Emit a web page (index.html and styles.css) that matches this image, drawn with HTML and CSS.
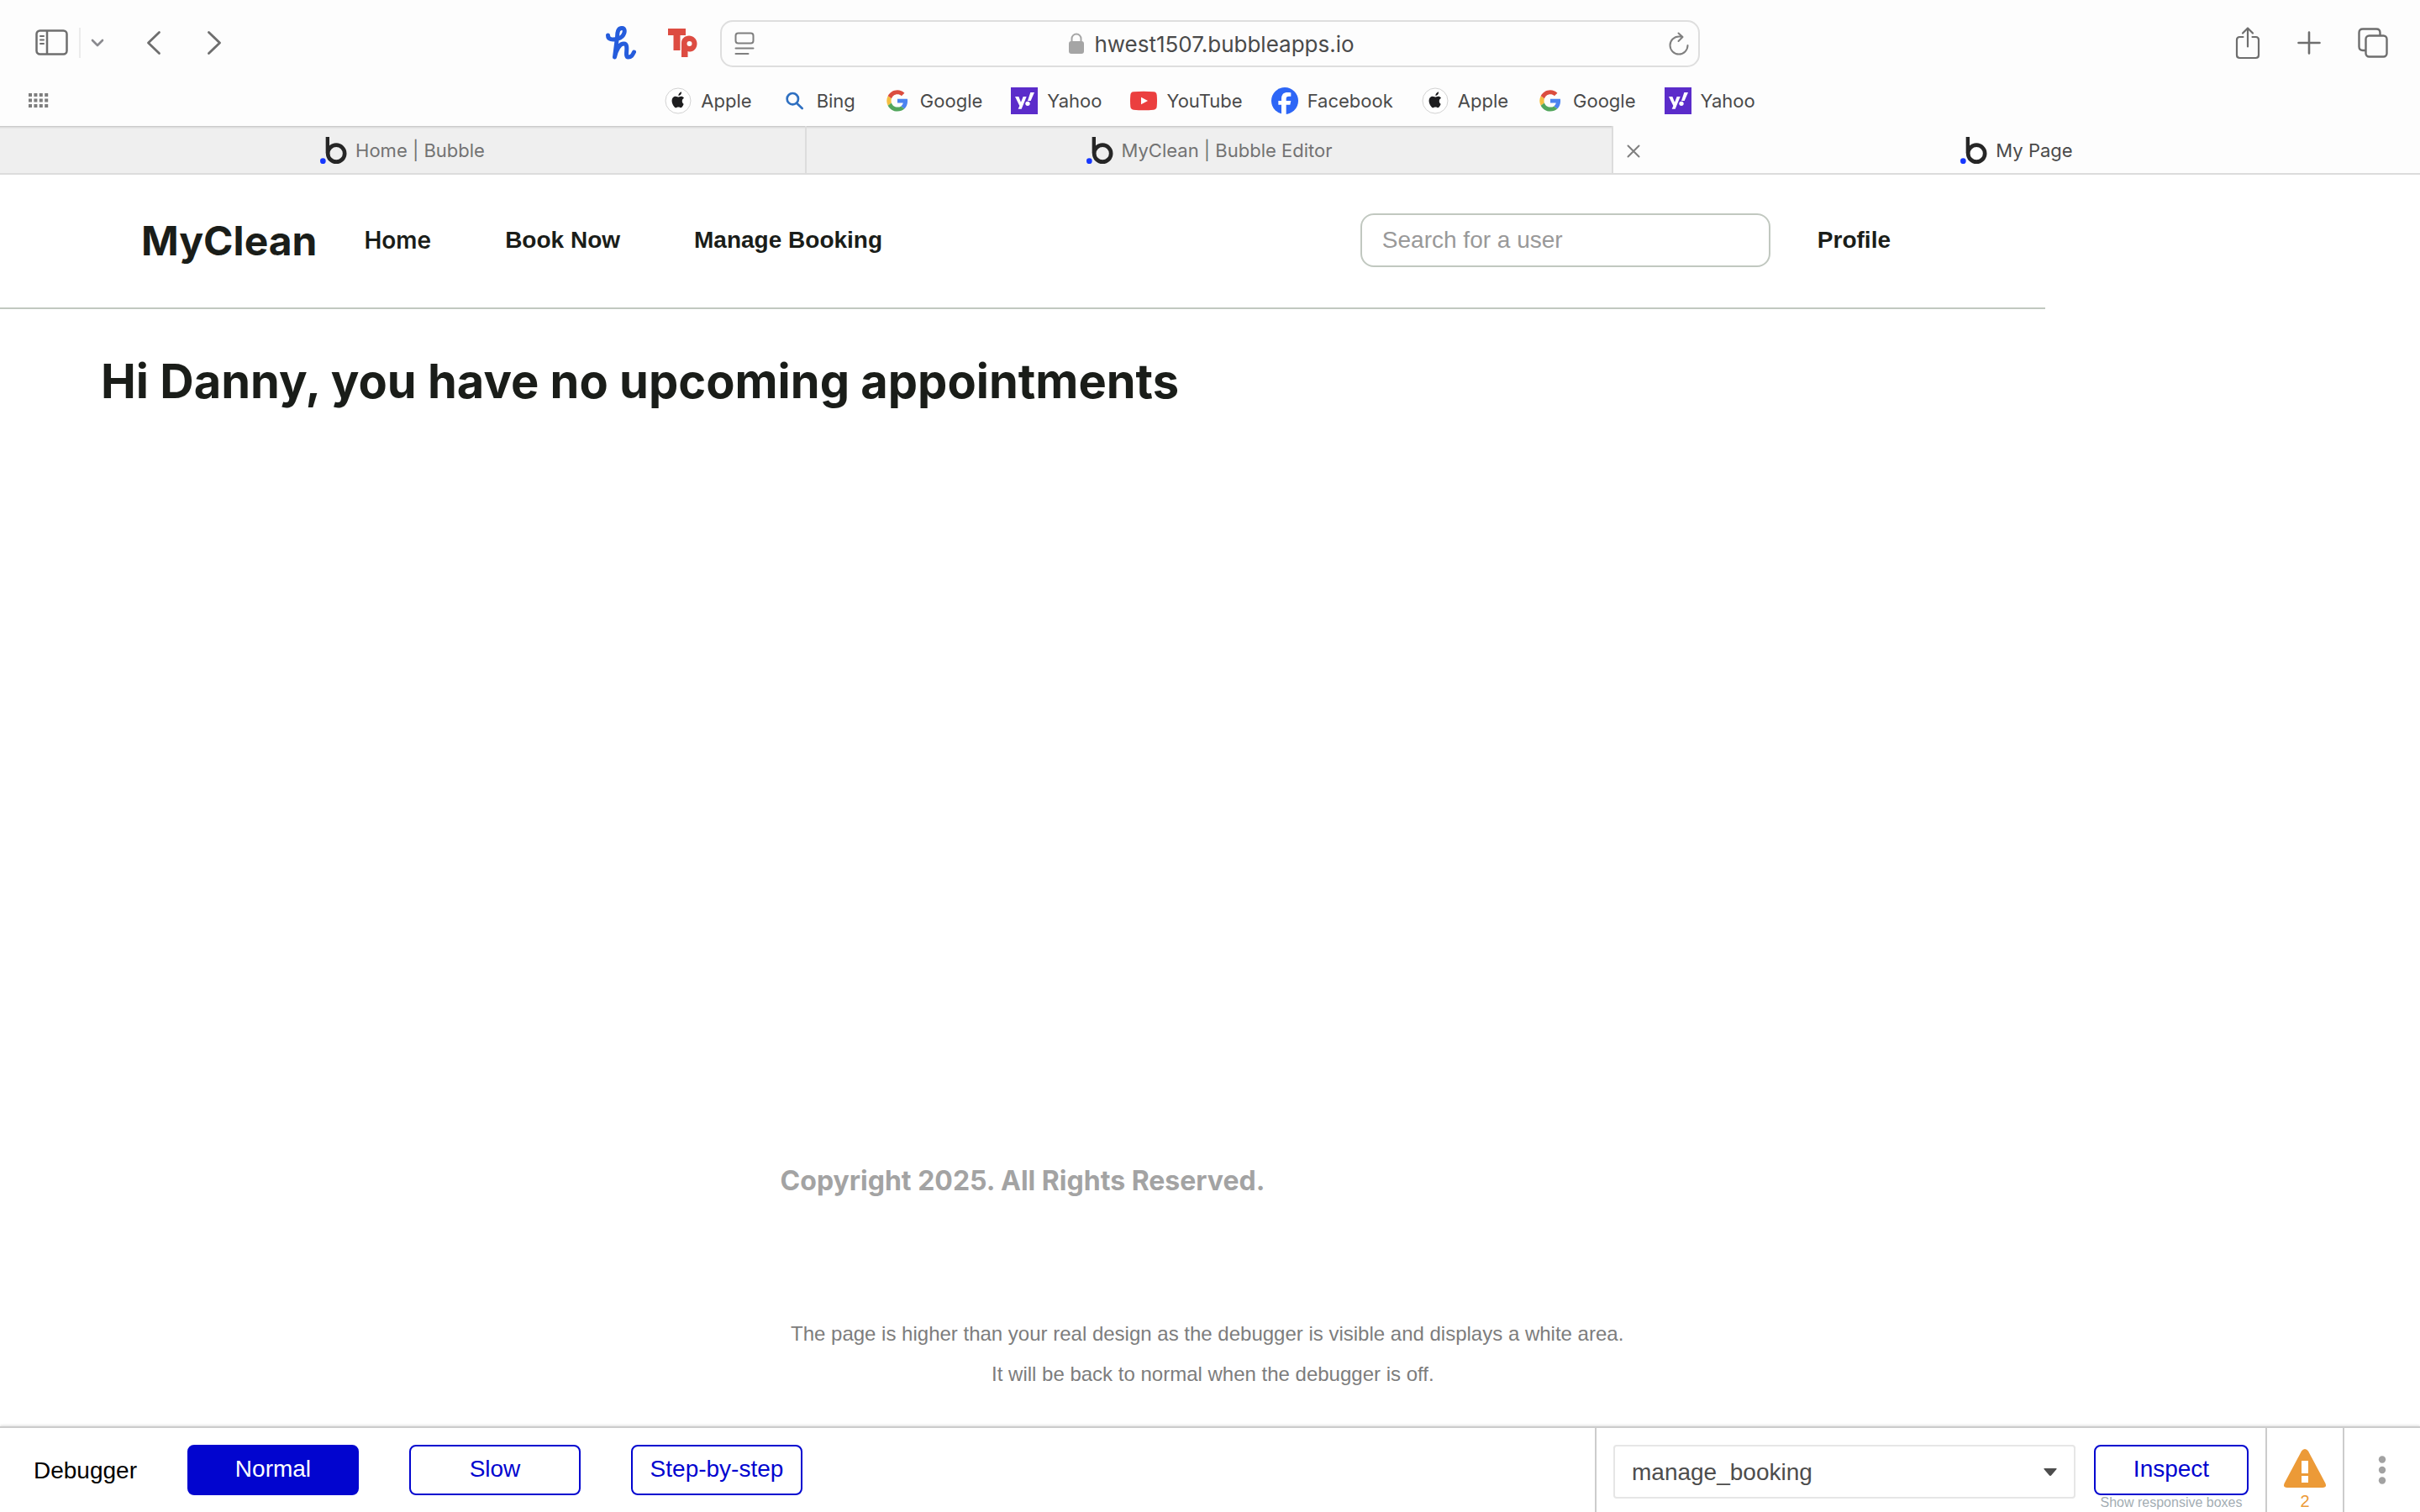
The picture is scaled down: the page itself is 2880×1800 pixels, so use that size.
FILE: index.html
```html
<!DOCTYPE html>
<html lang="en">
<head>
<meta charset="utf-8">
<title>My Page</title>
<link rel="stylesheet" href="styles.css">
</head>
<body>
<svg class="sprite" aria-hidden="true">
  <symbol id="i-apple" viewBox="0 0 96 96">
    <circle cx="48" cy="48" r="45" fill="#fff" stroke="#d2d2d2" stroke-width="3"/>
    <path fill="#1d1d1f" d="M68 59c-1 4-3 7-5 10-3 4-5 4-8 3-4-2-8-2-12 0-4 2-6 0-9-3-9-11-11-26-4-33 5-5 11-4 16-2 2 1 4 1 6 0 6-3 13-2 17 4-9 5-8 17-1 21z"/>
    <path fill="#1d1d1f" d="M49 30c0-7 5-12 11-14 1 7-4 14-11 14z"/>
  </symbol>
  <symbol id="i-bing" viewBox="0 0 96 96">
    <g fill="none" stroke="#2f70c1" stroke-width="8" stroke-linecap="round"><circle cx="43" cy="41" r="20"/><path d="M58 57l19 18"/></g>
  </symbol>
  <symbol id="i-google" viewBox="0 0 48 48">
    <g transform="translate(5 5) scale(.79)">
    <path fill="#db4d3f" d="M24 9.500c3.540 0 6.710 1.220 9.210 3.600l6.850-6.850C35.900 2.380 30.470 0 24 0 14.620 0 6.510 5.380 2.560 13.220l7.980 6.190C12.430 13.720 17.740 9.500 24 9.500z"/>
    <path fill="#4c84f0" d="M46.980 24.550c0-1.570-.15-3.090-.38-4.550H24v9.020h12.940c-.58 2.960-2.260 5.480-4.780 7.180l7.730 6c4.510-4.180 7.090-10.360 7.090-17.650z"/>
    <path fill="#f5bf41" d="M10.530 28.590a14.500 14.500 0 0 1 0-9.180l-7.980-6.190a24 24 0 0 0 0 21.560z"/>
    <path fill="#52a65c" d="M24 48c6.480 0 11.930-2.130 15.890-5.810l-7.730-6c-2.150 1.450-4.920 2.300-8.160 2.300-6.260 0-11.570-4.220-13.470-9.910l-7.980 6.190C6.510 42.620 14.620 48 24 48z"/>
    </g>
  </symbol>
  <symbol id="i-yahoo" viewBox="0 0 96 96">
    <path fill="#5b2cca" d="M0 0h96v96H0z"/>
    <path fill="#fff" d="M15 33h13l8 20 8-20h12L38 77H26l5-11zM70 18h14L71 48H60z"/>
    <circle cx="60" cy="58" r="8" fill="#fff"/>
  </symbol>
  <symbol id="i-youtube" viewBox="0 0 96 96">
    <path fill="#eb3f3f" d="M12 16q36-3 72 0 10 1 11 11 2 21 0 42-1 10-11 11-36 3-72 0-10-1-11-11-2-21 0-42 1-10 11-11z"/>
    <path fill="#fff" d="M39 35v26l24-13z"/>
  </symbol>
  <symbol id="i-facebook" viewBox="0 0 96 96">
    <circle cx="48" cy="48" r="48" fill="#2d66f6"/>
    <path fill="#fff" d="M36 96V62H25V48h11v-7c0-16 8-23 22-23 4 0 9 0 12 1v13h-7c-8 0-10 3-10 9v7h17l-3 14H53v34z"/>
  </symbol>
  <symbol id="i-bubble" viewBox="0 0 96 96">
    <path d="M26.500 0v58" stroke="#262626" stroke-width="13"/>
    <circle cx="57.500" cy="59" r="30" fill="none" stroke="#262626" stroke-width="14"/>
    <circle cx="10" cy="86" r="10" fill="#1738ff"/>
  </symbol>
</svg>

<header class="browser">
  <div class="toolbar">
    <div class="toolbar-side">
      <div class="window-controls">
        <button class="icon-btn" aria-label="Sidebar"><svg width="40" height="32" viewBox="0 0 40 32" fill="none" stroke="#6e6e6e"><rect x="1.500" y="1.500" width="36" height="28" rx="4" stroke-width="2.500"/><path d="M14 2v28" stroke-width="2.500"/><path d="M6 8h4M6 12.500h4M6 17h4" stroke-width="2" stroke-linecap="round"/></svg></button>
        <span class="divider"></span>
        <button class="icon-btn chevron" aria-label="Tab groups"><svg width="16" height="12" viewBox="0 0 16 12" fill="none" stroke="#8a8a8f" stroke-width="2.600" stroke-linecap="round" stroke-linejoin="round"><path d="M2 3l6 6 6-6"/></svg></button>
        <button class="icon-btn back" aria-label="Back"><svg width="18" height="30" viewBox="0 0 18 30" fill="none" stroke="#6e6e6e" stroke-width="2.800" stroke-linecap="round" stroke-linejoin="round"><path d="M15.500 2.500L2.500 15l13 12.500"/></svg></button>
        <button class="icon-btn" aria-label="Forward"><svg width="18" height="30" viewBox="0 0 18 30" fill="none" stroke="#6e6e6e" stroke-width="2.800" stroke-linecap="round" stroke-linejoin="round"><path d="M2.500 2.500l13 12.500-13 12.500"/></svg></button>
      </div>
      <div class="extensions">
        <button class="icon-btn" aria-label="Honey"><svg width="36" height="40" viewBox="0 0 36 40" fill="none" stroke="#255cdc" stroke-width="5" stroke-linecap="round" stroke-linejoin="round"><path d="M2.500 11c0 5 5 6 12 4 8-2 10-12 5-12.500-5-.5-6 5-6 11L10.500 37c2-9 6-16 11-16 7 0 0 16 5 16 4 0 5-2 7-6"/></svg></button>
        <button class="icon-btn" aria-label="Topcashback"><svg width="36" height="36" viewBox="0 0 36 36"><g fill="#dd4c42"><path d="M0 1h21v8h-6.500v18h-8V9H0z"/><path fill-rule="evenodd" d="M16 35V18c0-5 4-8.500 9-8.500s9.500 4 9.500 9.500-4 9.500-8 9.500c-1.500 0-2 0-3-.5v7zM25.500 16a3 3 0 1 0 0 6 3 3 0 0 0 0-6z"/></g></svg></button>
      </div>
    </div>
    <div class="address">
      <button class="icon-btn" aria-label="Reader"><svg width="24" height="28" viewBox="0 0 24 28" fill="none" stroke="#7f7f7f" stroke-width="2" stroke-linecap="round"><rect x="1.500" y="1.500" width="21" height="12" rx="3"/><path d="M1.500 19.500h21M1.500 26h15"/></svg></button>
      <span class="url"><svg width="18" height="26" viewBox="0 0 18 26"><rect y="10" width="18" height="15" rx="3" fill="#a5a5a5"/><path d="M3.500 11V7a5.500 5.500 0 0 1 11 0v4" fill="none" stroke="#a5a5a5" stroke-width="2"/></svg>hwest1507.bubbleapps.io</span>
      <button class="icon-btn" aria-label="Reload"><svg width="24" height="28" viewBox="0 0 24 28" fill="none" stroke="#7f7f7f" stroke-width="2" stroke-linecap="round" stroke-linejoin="round"><path d="M22.500 16a10.500 10.500 0 1 1-10.500-10.500h4M11.500 1.500l5 4.500-5 5"/></svg></button>
    </div>
    <div class="toolbar-side actions">
      <button class="icon-btn" aria-label="Share"><svg width="30" height="40" viewBox="0 0 30 40" fill="none" stroke="#6e6e6e" stroke-width="2.200" stroke-linecap="round" stroke-linejoin="round"><path d="M9.500 13H5.500q-3.500 0-3.500 3.500v18q0 3.500 3.500 3.500h19q3.500 0 3.500-3.500v-18q0-3.500-3.500-3.500h-4M15 24.500V2.500M9 8.500l6-6 6 6"/></svg></button>
      <button class="icon-btn" aria-label="New tab"><svg width="28" height="28" viewBox="0 0 28 28" fill="none" stroke="#6e6e6e" stroke-width="2.600" stroke-linecap="round"><path d="M14 1.500v25M1.500 14h25"/></svg></button>
      <button class="icon-btn" aria-label="Tab overview"><svg width="36" height="36" viewBox="0 0 36 36" fill="none" stroke="#6e6e6e" stroke-width="2.400"><rect x="9.500" y="9.500" width="25" height="25" rx="4"/><path d="M9.500 27H6q-4.500 0-4.500-4.500V6Q1.500 1.500 6 1.500h16q4.500 0 4.500 4.500v3.500"/></svg></button>
    </div>
  </div>

  <nav class="bookmarks" aria-label="Favourites">
    <button class="icon-btn grid-btn" aria-label="All bookmarks"><svg width="24" height="18" viewBox="0 0 24 18" stroke="#7d7d7d" stroke-width="4" stroke-dasharray="4 2.400"><path d="M0 2h24M0 8.500h24M0 15h24"/></svg></button>
    <a href="#"><svg class="fav"><use href="#i-apple"/></svg>Apple</a>
    <a href="#"><svg class="fav"><use href="#i-bing"/></svg>Bing</a>
    <a href="#"><svg class="fav"><use href="#i-google"/></svg>Google</a>
    <a href="#"><svg class="fav"><use href="#i-yahoo"/></svg>Yahoo</a>
    <a href="#"><svg class="fav"><use href="#i-youtube"/></svg>YouTube</a>
    <a href="#"><svg class="fav"><use href="#i-facebook"/></svg>Facebook</a>
    <a href="#"><svg class="fav"><use href="#i-apple"/></svg>Apple</a>
    <a href="#"><svg class="fav"><use href="#i-google"/></svg>Google</a>
    <a href="#"><svg class="fav"><use href="#i-yahoo"/></svg>Yahoo</a>
  </nav>

  <div class="tabs">
    <a class="tab" href="#"><svg class="fav"><use href="#i-bubble"/></svg>Home | Bubble</a>
    <a class="tab" href="#"><svg class="fav"><use href="#i-bubble"/></svg>MyClean | Bubble Editor</a>
    <div class="tab tab-active"><button class="icon-btn tab-close" aria-label="Close tab"><svg width="16" height="16" viewBox="0 0 16 16" stroke="#7f7f7f" stroke-width="2" stroke-linecap="round"><path d="M1.500 1.500l13 13M14.500 1.500l-13 13"/></svg></button><svg class="fav"><use href="#i-bubble"/></svg>My Page</div>
  </div>
</header>

<main class="page">
  <header class="site-header">
    <a class="logo" href="#">MyClean</a>
    <nav class="site-nav">
      <a class="home" href="#">Home</a>
      <a href="#">Book Now</a>
      <a href="#">Manage Booking</a>
    </nav>
    <input class="search" type="text" placeholder="Search for a user" aria-label="Search for a user">
    <a class="profile" href="#">Profile</a>
  </header>
  <h1>Hi Danny, you have no upcoming appointments</h1>
  <p class="copyright">Copyright 2025. All Rights Reserved.</p>
</main>

<p class="notice">The page is higher than your real design as the debugger is visible and displays a white area.&nbsp;<br>&nbsp;It will be back to normal when the debugger is off.</p>

<footer class="debugger">
  <div class="speeds">
    <span class="debugger-label">Debugger</span>
    <button class="btn btn-on">Normal</button>
    <button class="btn">Slow</button>
    <button class="btn">Step-by-step</button>
  </div>
  <div class="inspector">
    <div class="select-wrap">
      <select aria-label="Element"><option>manage_booking</option></select>
      <svg class="arrow" width="16" height="10" viewBox="0 0 16 10" fill="#4d4d4d"><path d="M1 0h14q1 0 .5 1L9.500 8q-1.500 2-3 0L.5 1Q0 0 1 0z"/></svg>
    </div>
    <div class="inspect">
      <button class="btn">Inspect</button>
      <a href="#">Show responsive boxes</a>
    </div>
  </div>
  <div class="issues">
    <svg width="50" height="46" viewBox="0 0 50 46"><path fill="#ec9a37" d="M25 0q2.500 0 4 2.500L49 40q3 6-3 6H4q-6 0-3-6L21 2.500Q22.500 0 25 0z"/><path fill="#fff" d="M21 14h8v15h-8zM21 32h8v8h-8z"/></svg>
    <span>2</span>
  </div>
  <button class="icon-btn more" aria-label="More"><svg width="10" height="34" viewBox="0 0 10 34" fill="#a2a2a2"><circle cx="5" cy="4.500" r="4.200"/><circle cx="5" cy="17" r="4.200"/><circle cx="5" cy="29.500" r="4.200"/></svg></button>
</footer>
</body>
</html>
```

FILE: styles.css
```css
* { box-sizing: border-box; }
body {
  margin: 0;
  min-height: 100vh;
  display: flex;
  flex-direction: column;
  background: #fff;
  font-family: "Liberation Sans", Arial, sans-serif;
  font-size: 28px;
}
a { color: inherit; text-decoration: none; }
h1, p { margin: 0; }
svg { display: block; flex: none; }
.sprite { position: absolute; width: 0; height: 0; }
.icon-btn {
  padding: 0;
  border: 0;
  background: none;
  display: flex;
  align-items: center;
  justify-content: center;
}

/* Browser chrome */
.browser {
  background: #fdfdfd;
  color: #4a4a4a;
  font-family: Inter, sans-serif;
}
.toolbar {
  display: grid;
  grid-template-columns: 1fr minmax(0, 1166px) 1fr;
  align-items: center;
  padding-top: 24px;
}
.toolbar-side {
  display: flex;
  align-items: center;
  justify-content: space-between;
  padding: 0 26px 2px 42px;
}
.window-controls, .extensions { display: flex; align-items: center; }
.extensions { gap: 38px; }
.divider { width: 2px; height: 36px; margin: 0 12px; background: #ebebeb; }
.back { margin: 0 54px 0 50px; }
.actions { justify-content: flex-end; gap: 44px; padding: 0 38px 2px 0; }
.address {
  height: 56px;
  padding: 0 11px 0 15px;
  border: 2px solid #dedede;
  border-radius: 15px;
  display: flex;
  align-items: center;
  justify-content: space-between;
}
.url { display: flex; align-items: center; gap: 12px; font-size: 26px; }
.bookmarks {
  position: relative;
  height: 70px;
  padding-top: 10px;
  display: flex;
  align-items: center;
  justify-content: center;
  gap: 34px;
  font-size: 22px;
  line-height: 24px;
}
.bookmarks a { display: flex; align-items: center; gap: 11px; }
.grid-btn { position: absolute; left: 34px; top: 31px; }
.fav { width: 32px; height: 32px; }
.tabs {
  display: grid;
  grid-template-columns: repeat(3, 1fr);
  height: 58px;
  border-bottom: 2px solid #dcdcdc;
}
.tab {
  position: relative;
  display: flex;
  align-items: center;
  justify-content: center;
  gap: 10px;
  padding-top: 2px;
  border-right: 2px solid #dcdcdc;
  background: #efefef;
  box-shadow: inset 0 4px 3px -3px #b8b8b8;
  color: #737373;
  font-size: 22px;
}
.tab-active { background: none; border: 0; box-shadow: none; color: #4a4a4a; }
.tab-close { position: absolute; left: 16px; top: 22px; }

/* Site page */
.page {
  flex: 1;
  display: flex;
  flex-direction: column;
  margin-right: 446px;
  color: #1a1d19;
}
.site-header {
  display: flex;
  align-items: center;
  height: 160px;
  padding: 0 184px 2px 168px;
  border-bottom: 2px solid #c1c8c0;
  font-weight: 700;
}
.logo { font-family: Inter, sans-serif; font-size: 48px; font-weight: 700; }
.site-nav { display: flex; align-items: center; gap: 88px; margin-left: 56px; }
.home { font-family: Inter, sans-serif; font-weight: 600; }
.search {
  width: 488px;
  height: 64px;
  margin: 0 56px 0 auto;
  padding: 0 24px;
  border: 2px solid #c1c8c0;
  border-radius: 16px;
  background: #fff;
  font: 28px "Liberation Sans", Arial, sans-serif;
}
.search::placeholder { color: #999; }
h1 {
  padding: 50px 120px;
  font: 700 56px/72px Inter, sans-serif;
}
.copyright {
  margin-top: auto;
  text-align: center;
  color: #a3a3a3;
  font: 700 32px/40px Inter, sans-serif;
}
.notice {
  padding: 138px 0 38px;
  color: #7d7d7d;
  font-size: 24px;
  line-height: 48px;
  text-align: center;
}

/* Debugger bar */
.debugger {
  display: flex;
  height: 102px;
  border-top: 2px solid #ccc;
  box-shadow: 0 -1px 3px #ddd;
  background: #fff;
}
.speeds { flex: 1; display: flex; gap: 60px; padding: 20px 40px; }
.debugger-label { color: #000; line-height: 62px; }
.btn {
  width: 204px;
  height: 60px;
  padding: 0 0 2px;
  border: 2px solid #0205cf;
  border-radius: 8px;
  background: #fff;
  color: #0205cf;
  font: 28px "Liberation Sans", Arial, sans-serif;
}
.btn-on { background: #0205cf; color: #fff; }
.inspector {
  display: flex;
  gap: 22px;
  padding: 20px 20px 0;
  border-left: 2px solid #ccc;
}
.select-wrap { position: relative; width: 550px; height: 64px; }
select {
  appearance: none;
  width: 100%;
  height: 100%;
  padding: 0 20px;
  border: 2px solid #e6e6e6;
  border-radius: 4px;
  background: #fff;
  color: #4d4d4d;
  font: 28px "Liberation Sans", Arial, sans-serif;
}
.arrow { position: absolute; right: 22px; top: 28px; }
.inspect { display: flex; flex-direction: column; align-items: center; width: 184px; }
.inspect .btn { width: 100%; }
.inspect a { color: #a3adb3; font-size: 16px; line-height: 18px; white-space: nowrap; }
.issues {
  display: flex;
  flex-direction: column;
  align-items: center;
  width: 92px;
  padding-top: 25px;
  border-left: 2px solid #ccc;
  color: #ec9a37;
  font-size: 20px;
  line-height: 32px;
}
.more { width: 92px; border-left: 2px solid #ccc; }
```
